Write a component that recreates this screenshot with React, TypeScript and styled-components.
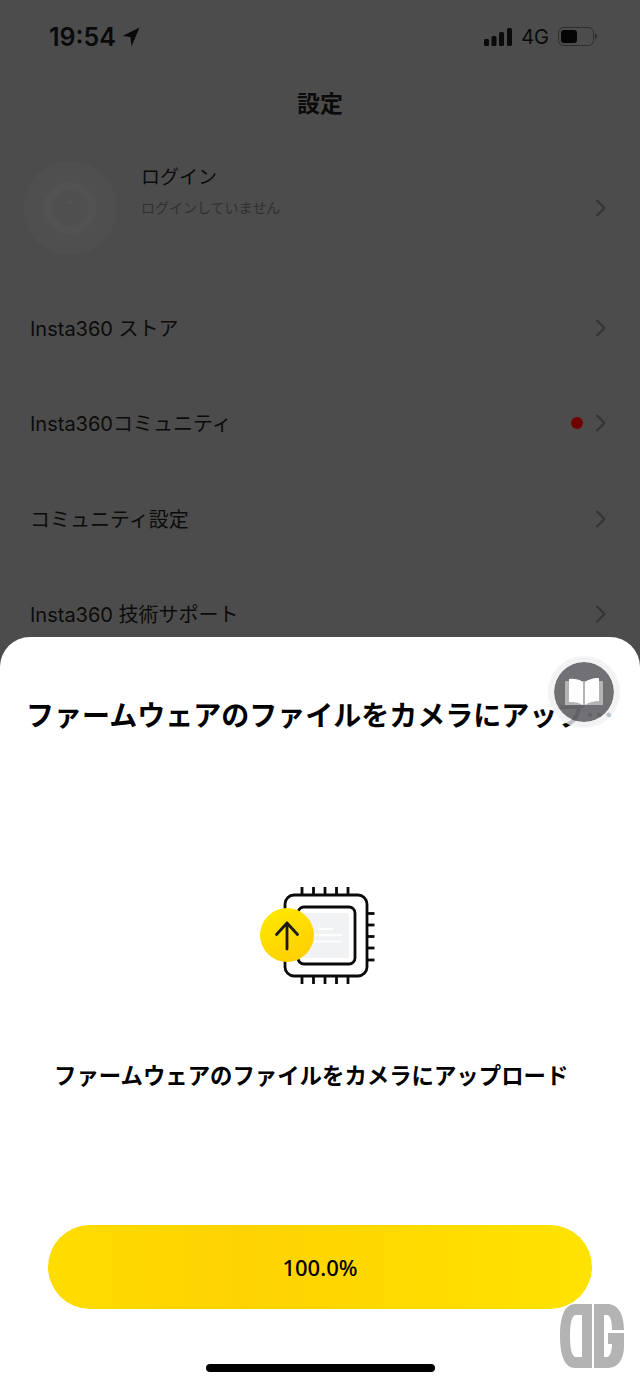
import React from "react";
import styled, { createGlobalStyle } from "styled-components";

const GlobalStyle = createGlobalStyle`
  html, body { margin: 0; padding: 0; background: #fff; }
  body { font-family: "Inter", "Noto Sans CJK JP", sans-serif; }
`;

const Screen = styled.div`
  position: relative;
  width: 640px;
  height: 1384px;
  overflow: hidden;
  display: flex;
  flex-direction: column;
  background: #4c4c4c;
`;

const Settings = styled.div`
  height: 637px;
  flex: none;
  overflow: hidden;
  color: #0b0b0b;
  font-family: "Noto Sans CJK JP", sans-serif;
`;

const StatusBar = styled.div`
  height: 73px;
  display: flex;
  align-items: center;
  justify-content: space-between;
  padding: 0 43px 0 49px;
  box-sizing: border-box;
`;

const TimeBox = styled.div`
  display: flex;
  align-items: center;
  gap: 6px;
  font: 600 25px/30px "Inter", sans-serif;
  color: #0a0a0a;
`;

const StatusRight = styled.div`
  display: flex;
  align-items: center;
`;

const Network = styled.span`
  font: 400 20px/24px "Inter", sans-serif;
  color: #0a0a0a;
  margin: 0 9px 0 9px;
`;

const Title = styled.div`
  height: 56px;
  margin-top: 1px;
  display: flex;
  align-items: center;
  justify-content: center;
  font-size: 23px;
  font-weight: 700;
`;

const LoginRow = styled.div`
  height: 106px;
  margin-top: 25px;
  padding: 0 33px 0 22px;
  display: flex;
  align-items: center;
`;

const Avatar = styled.div`
  width: 96px;
  height: 96px;
  flex: none;
  display: flex;
  align-items: center;
  justify-content: center;
  margin-right: 23px;
`;

const LoginText = styled.div`
  flex: 1;
  display: flex;
  flex-direction: column;
  gap: 10px;
  margin-top: -36px;
`;

const LoginName = styled.div`
  font-size: 19px;
  line-height: 24px;
  font-weight: 400;
`;

const LoginSub = styled.div`
  font-size: 14px;
  line-height: 18px;
  color: #303030;
`;

const MenuList = styled.div`
  margin-top: 19px;
`;

const MenuRow = styled.div`
  height: 95.5px;
  padding: 0 33px 0 30px;
  display: flex;
  align-items: center;
`;

const MenuLabel = styled.span`
  flex: 1;
  font-family: "Inter", "Noto Sans CJK JP", sans-serif;
  font-size: 20px;
  line-height: 24px;
  margin-top: 2px;
`;

const Dot = styled.span`
  width: 12px;
  height: 12px;
  border-radius: 50%;
  background: #6e0000;
  margin-right: 12px;
`;

const Sheet = styled.div`
  flex: 1;
  background: #fff;
  border-radius: 30px 30px 0 0;
  display: flex;
  flex-direction: column;
  color: #000;
  font-family: "Noto Sans CJK JP", sans-serif;
`;

const SheetTitle = styled.div`
  margin: 57px 24px 0 26px;
  height: 40px;
  line-height: 40px;
  font-size: 28px;
  font-weight: 700;
  white-space: nowrap;
  overflow: hidden;
  text-overflow: ellipsis;
`;

const Illustration = styled.div`
  margin-top: 146px;
  display: flex;
  justify-content: center;
  padding-right: 5px;
  height: 110px;
`;

const Caption = styled.div`
  margin: 67px 0 0 54px;
  height: 34px;
  line-height: 34px;
  font-size: 22.4px;
  font-weight: 700;
  white-space: nowrap;
`;

const ProgressButton = styled.div`
  margin: 134px 48px 0;
  height: 84px;
  border-radius: 42px;
  background: linear-gradient(90deg, #ffdc00 0%, #ffd300 36%, #ffdb00 70%, #ffe300 100%);
  display: flex;
  align-items: center;
  justify-content: center;
  font: 500 22px/26px "Noto Sans", "Inter", sans-serif;
  color: #000;
  padding-bottom: 1px;
  box-sizing: border-box;
`;

const HomeBar = styled.div`
  margin: 55px auto 0;
  width: 229px;
  height: 8px;
  border-radius: 4px;
  background: #000;
`;

const BookButton = styled.div`
  position: absolute;
  left: 548px;
  top: 656px;
  width: 72px;
  height: 72px;
  box-sizing: border-box;
  border-radius: 50%;
  border: 6px solid rgba(240, 240, 244, 0.8);
  background: rgba(104, 104, 108, 0.94);
  background-clip: padding-box;
  display: flex;
  align-items: center;
  justify-content: center;
`;

const Watermark = styled.svg`
  position: absolute;
  left: 560px;
  top: 1304px;
`;

const Chevron = () => (
  <svg width="12" height="20" viewBox="0 0 12 20" fill="none">
    <path d="M2 2.500l7.500 7.500-7.500 7.500" stroke="#333" strokeWidth="2" strokeLinecap="round" strokeLinejoin="round" />
  </svg>
);

const Signal = () => (
  <svg width="28" height="18" viewBox="0 0 28 18" fill="#0a0a0a">
    <rect x="0" y="11" width="5" height="7" rx="1.500" />
    <rect x="7.500" y="8" width="5" height="10" rx="1.500" />
    <rect x="15" y="4" width="5" height="14" rx="1.500" />
    <rect x="23" y="0" width="5" height="18" rx="1.500" />
  </svg>
);

const Battery = () => (
  <svg width="39" height="19" viewBox="0 0 39 19" fill="none">
    <rect x="0.500" y="0.500" width="35" height="18" rx="5" stroke="#2e2e2e" />
    <rect x="3" y="3" width="16" height="13" rx="3" fill="#050505" />
    <path d="M37 6.500c1.300.5 2 1.600 2 3s-.7 2.500-2 3z" fill="#2e2e2e" />
  </svg>
);

const LocationArrow = () => (
  <svg width="18" height="20" viewBox="0 0 18 20" fill="#0a0a0a">
    <path d="M17.500 0.500 L0.500 9 L8.500 10 L9.500 19.500 Z" />
  </svg>
);

const ChipIcon = () => (
  <svg width="125" height="110" viewBox="255 880 125 110" fill="none">
    <defs>
      <linearGradient id="coin" x1="0.2" y1="0" x2="0.7" y2="1">
        <stop offset="0" stopColor="#ffe800" />
        <stop offset="1" stopColor="#ffcf00" />
      </linearGradient>
    </defs>
    <g stroke="#0a0a0a" strokeWidth="2.800">
      {[302, 313.500, 325, 336.500, 348].map((x) => (
        <React.Fragment key={x}>
          <path d={`M${x} 887v8`} />
          <path d={`M${x} 976v8`} />
        </React.Fragment>
      ))}
      {[913.500, 925, 936.500, 948, 960].map((y) => (
        <path key={y} d={`M367 ${y}h7.500`} />
      ))}
      <rect x="285" y="895" width="82" height="81" rx="9" />
    </g>
    <rect x="303" y="913" width="46" height="45" rx="2" fill="#f1f2f3" />
    <g stroke="#fff" strokeWidth="1.600">
      <path d="M318 929h15" />
      <path d="M314 935h28" />
      <path d="M314 941.500h28" />
    </g>
    <rect x="298" y="907" width="57" height="57" rx="6" stroke="#0a0a0a" strokeWidth="2.800" />
    <circle cx="287" cy="935" r="27" fill="url(#coin)" />
    <path
      d="M287 949v-26M276.500 934.500L287 923l10.500 11.500"
      stroke="#1a1a1a"
      strokeWidth="2.800"
      strokeLinecap="round"
      strokeLinejoin="round"
    />
  </svg>
);

const BookIcon = () => (
  <svg width="40" height="28" viewBox="0 0 40 28">
    <path d="M1 3h38v24H1z" fill="#b4b4b6" />
    <path d="M5 1c5-.7 10 .4 14 3v23c-4-2.500-9-3.500-14-3z" fill="#fff" />
    <path d="M35 0c-5-.2-10 1.200-14 4v23c4-2.800 9-3.800 14-4z" fill="#fff" />
  </svg>
);

const menuItems = [
  { label: "Insta360 ストア" },
  { label: "Insta360コミュニティ", badge: true },
  { label: "コミュニティ設定" },
  { label: "Insta360 技術サポート" },
];

export default function App() {
  return (
    <Screen>
      <GlobalStyle />
      <Settings>
        <StatusBar>
          <TimeBox>
            19:54
            <LocationArrow />
          </TimeBox>
          <StatusRight>
            <Signal />
            <Network>4G</Network>
            <Battery />
          </StatusRight>
        </StatusBar>
        <Title>設定</Title>
        <LoginRow>
          <Avatar>
            <svg width="96" height="96" viewBox="0 0 96 96" fill="none">
              <circle cx="48" cy="48" r="47" fill="#4f4f4f" />
              <circle cx="48" cy="48" r="22" stroke="#525252" strokeWidth="8" />
              <circle cx="48" cy="42" r="2" fill="#555" />
            </svg>
          </Avatar>
          <LoginText>
            <LoginName>ログイン</LoginName>
            <LoginSub>ログインしていません</LoginSub>
          </LoginText>
          <Chevron />
        </LoginRow>
        <MenuList>
          {menuItems.map((item) => (
            <MenuRow key={item.label}>
              <MenuLabel>{item.label}</MenuLabel>
              {item.badge && <Dot />}
              <Chevron />
            </MenuRow>
          ))}
        </MenuList>
      </Settings>
      <Sheet>
        <SheetTitle>ファームウェアのファイルをカメラにアップロード</SheetTitle>
        <Illustration>
          <ChipIcon />
        </Illustration>
        <Caption>ファームウェアのファイルをカメラにアップロード</Caption>
        <ProgressButton>100.0%</ProgressButton>
        <HomeBar />
      </Sheet>
      <BookButton>
        <BookIcon />
      </BookButton>
      <Watermark width="64" height="64" viewBox="0 0 64 64" fill="#b3b3b3">
        <path
          fillRule="evenodd"
          d="M32 0H15C5 0 0 12 0 32s5 32 15 32h17zM22 11h-6c-4 0-6 7-6 21s2 21 6 21h6z"
        />
        <path d="M34 0h13c11 0 17 10 17 26H52c0-10-2-15-5-15h-3v42h3c3 0 5-6 5-13h-4V29h16v13c0 13-6 22-16 22H34z" />
      </Watermark>
    </Screen>
  );
}
